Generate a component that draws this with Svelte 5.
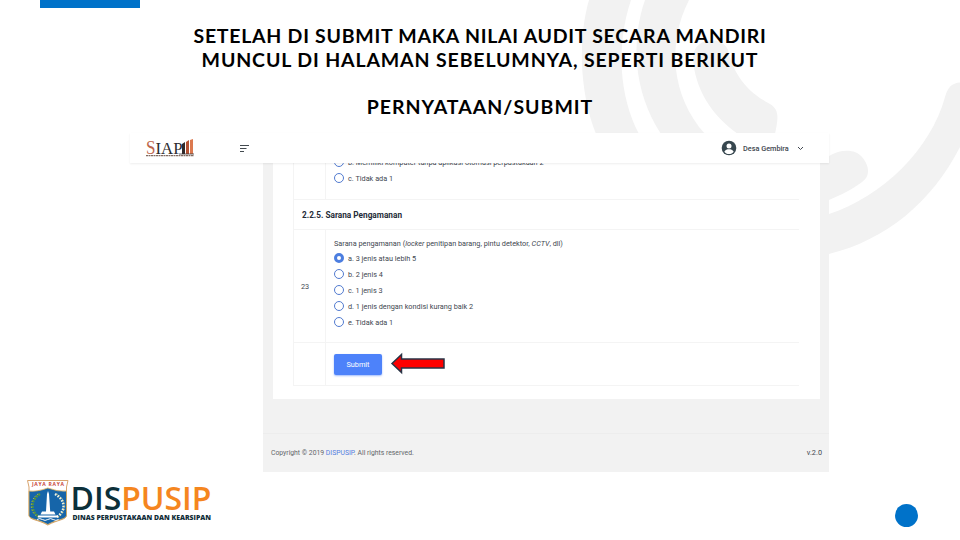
<script lang="ts">
	interface Option {
		label: string;
		checked?: boolean;
	}

	const title = [
		{ text: 'SETELAH DI SUBMIT MAKA NILAI AUDIT SECARA MANDIRI', spacing: 0.73 },
		{ text: 'MUNCUL DI HALAMAN SEBELUMNYA, SEPERTI BERIKUT', spacing: 0.86 },
		{ text: '', spacing: 0 },
		{ text: 'PERNYATAAN/SUBMIT', spacing: 1 }
	];

	const options: Option[] = [
		{ label: 'a. 3 jenis atau lebih 5', checked: true },
		{ label: 'b. 2 jenis 4' },
		{ label: 'c. 1 jenis 3' },
		{ label: 'd. 1 jenis dengan kondisi kurang baik 2' },
		{ label: 'e. Tidak ada 1' }
	];
</script>

{#snippet radio(label: string, checked = false)}
	<div class="option">
		<span class="radio" class:checked></span>
		<span>{label}</span>
	</div>
{/snippet}

<main class="slide">
	<svg class="backdrop" viewBox="0 0 960 540" aria-hidden="true">
		<path d="M589 0C579 34 578 88 596 134H639C619 96 616 45 631 0Z" />
		<path d="M645 0C631 40 633 91 661 134H705C671 96 667 43 689 0Z" />
		<path d="M693 57C694 37 722 35 728 50C733 72 745 91 770 104C780 110 778 119 775 134H738C712 116 694 88 693 57Z" />
		<path d="M829 156C841 149 855 149 862 157C869 165 871 176 862 182C853 189 841 195 829 200Z" />
		<path d="M829 214C882 197 931 149 945 97C948 86 953 83 960 82.500V147C932 202 886 240 829 254Z" />
	</svg>
	<div class="accent-bar"></div>

	<h1>
		{#each title as line}
			<span class="title-line" style:letter-spacing={`${line.spacing}px`}>{line.text}</span>
		{/each}
	</h1>

	<section class="app">
		<header>
			<svg class="siap" width="52" height="20" viewBox="0 0 52 20" role="img" aria-label="SIAP">
				<text class="siap-s" x="1" y="15.500" textLength="9.500" lengthAdjust="spacingAndGlyphs">S</text>
				<text class="siap-iap" x="10.500" y="15.500" textLength="27" lengthAdjust="spacingAndGlyphs">IAP</text>
				<path fill="#30292a" d="M37 6l3-2v12h-3z" />
				<path fill="#b65234" d="M41 4l3-2v14h-3z" />
				<path fill="#dc794f" d="M45 2l3-1v15h-3z" />
				<path stroke="#3c3432" stroke-width=".8" d="M34 16h15" />
				<path stroke="#806b62" stroke-width="1.200" stroke-dasharray="2 .5" d="M1 17.700h48" />
			</svg>
			<svg class="menu" width="11" height="9" viewBox="0 0 11 9">
				<path d="M1 1.500h9M1 4.500h6.500M1 7.500h4" />
			</svg>
			<div class="user">
				<svg width="16" height="16" viewBox="0 0 16 16">
					<circle cx="8" cy="8" r="7.300" fill="#37474f" />
					<circle cx="8" cy="6" r="2.500" fill="#fff" />
					<path fill="#fff" d="M3.300 11.700C4.500 9.500 6 9.200 8 9.200s3.500.3 4.700 2.500C11.500 13.300 10 14.100 8 14.100s-3.500-.8-4.700-2.400z" />
				</svg>
				<span class="user-name">Desa Gembira</span>
				<svg class="chevron" width="7" height="5" viewBox="0 0 7 5">
					<path d="M1 1l2.500 2.500L6 1" />
				</svg>
			</div>
		</header>

		<div class="page">
			<div class="card">
				<div class="table">
					<div class="row previous">
						<div class="number"></div>
						<div class="answer">
							{@render radio('b. Memiliki komputer tanpa aplikasi otomasi perpustakaan 2')}
							{@render radio('c. Tidak ada 1')}
						</div>
					</div>
					<div class="section-title">2.2.5. Sarana Pengamanan</div>
					<div class="row question">
						<div class="number">23</div>
						<div class="answer">
							<p>Sarana pengamanan (<i>locker</i> penitipan barang, pintu detektor, <i>CCTV</i>, dll)</p>
							{#each options as option}
								{@render radio(option.label, option.checked)}
							{/each}
						</div>
					</div>
					<div class="row actions">
						<div class="number"></div>
						<div class="answer">
							<button type="button">Submit</button>
							<svg class="arrow" width="56" height="24" viewBox="0 0 56 24">
								<path d="M2 11.500L11.500 2.500v4.500H54v9H11.500V20.500z" />
							</svg>
						</div>
					</div>
				</div>
			</div>
			<footer>
				<span class="copyright">Copyright © 2019 <a href="#dispusip">DISPUSIP</a>. All rights reserved.</span>
				<span class="version">v.2.0</span>
			</footer>
		</div>
	</section>

	<div class="brand">
		<svg width="190" height="52" viewBox="0 0 190 52" role="img" aria-label="DISPUSIP">
			<path fill="#fff" stroke="#d9a46e" d="M2.500 3.500H43L41.500 10v28.500C41 43 33 42.500 22.800 48C13 42.500 4.500 43 4 38.500V10z" />
			<path fill="#1665a9" stroke="#e0ae5c" stroke-width=".8" d="M4 14Q12 15 22.800 11Q33 15 41.500 14v24.500C41 42.500 33 42 22.800 47.500C13 42 4.500 42.500 4 38.500z" />
			<text class="motto" x="7" y="8.700" textLength="32" lengthAdjust="spacing">JAYA RAYA</text>
			<path fill="none" stroke="#54963d" stroke-width="2.500" stroke-dasharray="2 1" d="M15 17C5 23 5 34 14 40" />
			<path fill="none" stroke="#edf2df" stroke-width="2.500" stroke-dasharray="1.700 1.300" d="M30 17C41 23 41 34 32 40" />
			<path fill="none" stroke="#e6c44b" stroke-width=".8" stroke-dasharray="1 2" d="M13 17C4 23 4 35 13 40M32 17C42 23 42 35 33 40" />
			<path fill="#fff" d="M22 17l1-3 1 3 1.200 17.500H29l1.500 3H15.500l1.500-3h4zM13 38.500h20v2H13z" />
			<path stroke="#fff" d="M12 42.500q2.700-1.800 5.400 0t5.400 0 5.400 0 5.400 0" fill="none" />
			<text class="name" x="45.500" y="33" textLength="141" lengthAdjust="spacingAndGlyphs">DIS<tspan>PUSIP</tspan></text>
			<text class="tagline" x="47.500" y="42.500" textLength="138.500" lengthAdjust="spacingAndGlyphs">DINAS PERPUSTAKAAN DAN KEARSIPAN</text>
		</svg>
		<span class="dot"></span>
	</div>
</main>

<style>
	:global(body) {
		margin: 0;
		overflow: hidden;
	}
	.slide {
		position: relative;
		box-sizing: border-box;
		width: 960px;
		height: 540px;
		overflow: hidden;
		background: #fff;
		font-family: Roboto, 'Liberation Sans', sans-serif;
	}
	.slide svg {
		display: block;
		flex: none;
	}
	.backdrop {
		position: absolute;
		inset: 0;
		width: 960px;
		height: 540px;
		fill: #f2f2f2;
	}
	.accent-bar {
		width: 100px;
		height: 8px;
		margin-left: 40px;
		background: #0072c9;
	}
	h1 {
		position: relative;
		display: grid;
		grid-auto-rows: 23.700px;
		height: 109px;
		margin: 0;
		padding-top: 16px;
		box-sizing: border-box;
		color: #000;
		font: 700 19.500px/24px Lato, sans-serif;
		text-align: center;
		white-space: nowrap;
	}
	.app {
		position: relative;
		width: 699px;
		margin: 16px 0 0 130px;
		color: #414750;
		font-size: 7.300px;
	}
	header {
		position: relative;
		z-index: 1;
		display: flex;
		align-items: center;
		box-sizing: border-box;
		height: 30px;
		padding: 0 25px 0 15px;
		background: #fff;
		box-shadow: 0 1px 2px #00000012;
	}
	.siap-s,
	.siap-iap {
		font: 700 16px 'Liberation Serif', serif;
	}
	.siap-s {
		fill: #bd664b;
		font-size: 19px;
		font-weight: 400;
	}
	.siap-iap {
		fill: #2b2b2e;
		font-weight: 400;
	}
	.menu {
		margin-left: 42px;
		fill: none;
		stroke: #434b50;
		stroke-width: 1.200;
	}
	.user {
		display: flex;
		align-items: center;
		margin-left: auto;
	}
	.user-name {
		width: 47px;
		margin-left: 6px;
		font-weight: 500;
		white-space: nowrap;
	}
	.chevron {
		margin-left: 7px;
		fill: none;
		stroke: #414750;
	}
	.page {
		height: 309px;
		margin-left: 133px;
		background: #f2f2f2;
	}
	.card {
		box-sizing: border-box;
		width: 547px;
		height: 236px;
		margin-left: 10px;
		padding: 0 21px 0 20px;
		background: #fff;
	}
	.table {
		box-sizing: border-box;
		height: 223px;
		border: solid #f4f4f4;
		border-width: 0 0 1px 1px;
	}
	.row {
		display: grid;
		grid-template-columns: 32px 1fr;
		box-sizing: border-box;
		border-bottom: 1px solid #f4f4f4;
	}
	.number {
		display: flex;
		align-items: center;
		padding-left: 7px;
		border-right: 1px solid #f4f4f4;
	}
	.answer {
		position: relative;
		padding-left: 8px;
		white-space: nowrap;
	}
	.previous {
		height: 37px;
		overflow: hidden;
	}
	.previous .answer {
		margin-top: -9px;
	}
	.section-title {
		box-sizing: border-box;
		height: 30px;
		padding-left: 8px;
		border-bottom: 1px solid #f4f4f4;
		color: #252c38;
		font-size: 8.250px;
		font-weight: 700;
		line-height: 30px;
	}
	.question {
		height: 113px;
	}
	.question .answer {
		padding-top: 8px;
	}
	p {
		height: 12px;
		margin: 0;
		line-height: 12px;
	}
	.option {
		display: flex;
		align-items: center;
		gap: 4px;
		height: 16px;
	}
	.radio {
		box-sizing: border-box;
		width: 10px;
		height: 10px;
		border: 1px solid #527bd0;
		border-radius: 50%;
		background: #fff;
	}
	.radio.checked {
		border-width: 3px;
		border-color: #4c7ee0;
	}
	.actions {
		height: 42px;
		border-bottom: 0;
	}
	.actions .answer {
		padding-top: 11px;
	}
	button {
		display: block;
		width: 48px;
		height: 21px;
		padding: 0;
		border: 0;
		border-radius: 2px;
		background: #4d82fa;
		box-shadow: 0 1px 2px #4d82fa88;
		color: #fff;
		font: 400 7.300px Roboto, sans-serif;
	}
	.arrow {
		position: absolute;
		top: 9px;
		left: 64px;
		fill: #fe0000;
		stroke: #293345;
		stroke-width: 1.500;
	}
	footer {
		display: flex;
		align-items: center;
		justify-content: space-between;
		box-sizing: border-box;
		height: 39px;
		margin-top: 34px;
		padding: 0 7px 1px 8px;
		border-top: 1px solid #ededed;
		color: #62666a;
	}
	.copyright {
		font-size: 6.820px;
	}
	footer a {
		color: #527de0;
		text-decoration: none;
	}
	.version {
		color: #414750;
	}
	.brand {
		display: flex;
		align-items: center;
		justify-content: space-between;
		height: 52px;
		margin-top: 5px;
		padding: 0 42px 0 25px;
	}
	.motto {
		fill: #c7443a;
		font: 700 5px 'Open Sans', sans-serif;
	}
	.name {
		fill: #0c303a;
		font: 600 32.500px 'Open Sans', sans-serif;
	}
	.name tspan {
		fill: #f5861f;
	}
	.tagline {
		fill: #102d38;
		font: 800 7.500px 'Open Sans', sans-serif;
	}
	.dot {
		width: 23px;
		height: 23px;
		margin-top: 25px;
		border-radius: 50%;
		background: #0072c9;
	}
</style>
